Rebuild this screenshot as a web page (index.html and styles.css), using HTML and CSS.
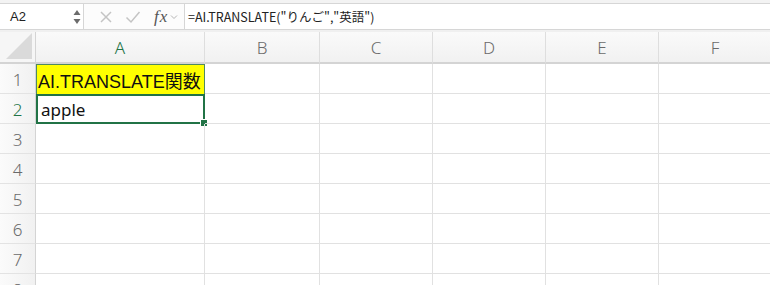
FILE: index.html
```html
<!DOCTYPE html>
<html lang="ja">
<head>
<meta charset="utf-8">
<link rel="stylesheet" href="styles.css">
</head>
<body>
<div class="app">
  <div class="fbar">
    <div class="namebox">
      <span class="nb-text">A2</span>
      <svg class="spin" width="8" height="16" viewBox="0 0 8 16"><path d="M4 1 L7.5 6 L0.5 6 Z" fill="#6b6b6b"/><path d="M4 15 L7.5 10 L0.5 10 Z" fill="#6b6b6b"/></svg>
    </div>
    <div class="tools">
      <svg class="ic" width="14" height="14" viewBox="0 0 14 14"><path d="M2 2 L12 12 M12 2 L2 12" stroke="#c4c4c4" stroke-width="1.5" fill="none"/></svg>
      <svg class="ic" width="16" height="14" viewBox="0 0 16 14"><path d="M1.5 7.5 L6 12 L14.5 2" stroke="#c4c4c4" stroke-width="1.5" fill="none"/></svg>
      <span class="fx"><i>f</i><i>x</i></span>
      <svg class="chev" width="8" height="6" viewBox="0 0 8 6"><path d="M1 1.5 L4 4.5 L7 1.5" stroke="#b5b5b5" stroke-width="1" fill="none"/></svg>
    </div>
    <div class="formula">=AI.TRANSLATE("りんご","英語")</div>
  </div>
  <div class="sheet">
    <div class="corner"><svg width="26" height="26" viewBox="0 0 26 26"><path d="M26 0 L26 26 L0 26 Z" fill="#dadada"/></svg></div>
    <div class="ch sel">A</div>
    <div class="ch">B</div>
    <div class="ch">C</div>
    <div class="ch">D</div>
    <div class="ch">E</div>
    <div class="ch last">F</div>

    <div class="rh">1</div>
    <div class="c a1">AI.TRANSLATE関数</div>
    <div class="c"></div><div class="c"></div><div class="c"></div><div class="c"></div><div class="c"></div>

    <div class="rh sel">2</div>
    <div class="c a2">apple<span class="handle"></span></div>
    <div class="c"></div><div class="c"></div><div class="c"></div><div class="c"></div><div class="c"></div>

    <div class="rh">3</div>
    <div class="c"></div><div class="c"></div><div class="c"></div><div class="c"></div><div class="c"></div><div class="c"></div>
    <div class="rh">4</div>
    <div class="c"></div><div class="c"></div><div class="c"></div><div class="c"></div><div class="c"></div><div class="c"></div>
    <div class="rh">5</div>
    <div class="c"></div><div class="c"></div><div class="c"></div><div class="c"></div><div class="c"></div><div class="c"></div>
    <div class="rh">6</div>
    <div class="c"></div><div class="c"></div><div class="c"></div><div class="c"></div><div class="c"></div><div class="c"></div>
    <div class="rh">7</div>
    <div class="c"></div><div class="c"></div><div class="c"></div><div class="c"></div><div class="c"></div><div class="c"></div>
    <div class="rh">8</div>
    <div class="c"></div><div class="c"></div><div class="c"></div><div class="c"></div><div class="c"></div><div class="c"></div>
  </div>
</div>
</body>
</html>
```
FILE: styles.css
```css
* { box-sizing: border-box; }
html, body { margin: 0; padding: 0; }
body {
  width: 770px;
  height: 287px;
  overflow: hidden;
  background: #fff;
  font-family: "Noto Sans", "Noto Sans CJK JP", sans-serif;
}
.app { width: 770px; }
.fbar {
  height: 32px;
  background: #f0f0f0;
  border-top: 3px solid #f3f3f3;
  display: flex;
  align-items: stretch;
  padding-bottom: 2px;
}
.fbar > * { border-top: 1px solid #d6d6d6; border-bottom: 1px solid #d6d6d6; }
.namebox {
  width: 84px;
  background: #fff;
  border-right: 1px solid #d6d6d6;
  display: flex;
  align-items: center;
  justify-content: space-between;
  padding: 0 2px 0 10px;
  font-size: 13px;
  color: #222;
}
.nb-text { font-family: "Liberation Sans", Arial, sans-serif; }
.tools {
  width: 101px;
  background: #fcfcfc;
  border-right: 1px solid #d6d6d6;
  display: flex;
  align-items: center;
  padding-left: 15px;
}
.tools .ic { margin-right: 12px; }
.fx {
  font-family: "Liberation Serif", "DejaVu Serif", serif;
  font-size: 17px;
  color: #555;
  margin-left: 1px;
}
.fx i:first-child { margin-right: 1px; }
.chev { margin-left: 3px; }
.formula {
  flex: 1;
  background: #fff;
  display: flex;
  align-items: center;
  padding-left: 3px;
  font-size: 12.5px;
  color: #222;
  font-family: "Noto Sans CJK JP", sans-serif;
}
.sheet {
  display: grid;
  grid-template-columns: 36px 169px 115px 113px 113px 113px 113px;
  grid-template-rows: 32px repeat(8, 30px);
  height: 253px;
  overflow: hidden;
}
.corner {
  background: #f6f6f6;
  border-right: 1px solid #d4d4d4;
  border-bottom: 2px solid #d4d4d4;
  display: flex;
  align-items: flex-end;
  justify-content: flex-end;
  padding: 0 3px 3px 0;
}
.ch {
  background: linear-gradient(#fafafa, #f1f1f1);
  border-right: 1px solid #dedede;
  border-bottom: 2px solid #d4d4d4;
  display: flex;
  align-items: center;
  justify-content: center;
  font-size: 17px;
  color: #6a6a6a;
  font-family: "Noto Sans", sans-serif;
  font-weight: 300;
}
.ch.last { border-right: 1px solid #e6e6e6; }
.ch.sel { color: #217346; }
.rh {
  background: linear-gradient(90deg, #fbfbfb, #f1f1f1);
  border-right: 1px solid #d4d4d4;
  border-bottom: 1px solid #e3e3e3;
  display: flex;
  align-items: center;
  justify-content: center;
  font-size: 17px;
  color: #6a6a6a;
  font-family: "Noto Sans", sans-serif;
  font-weight: 300;
  padding-top: 1px;
}
.rh.sel { color: #217346; }
.c {
  border-right: 1px solid #e1e1e1;
  border-bottom: 1px solid #e1e1e1;
  position: relative;
}
.a1 {
  background: #ffff00;
  border: 1px solid #4f8a60;
  border-bottom: none;
  display: flex;
  align-items: center;
  padding-left: 1px;
  font-size: 18px;
  color: #111;
  font-family: "Liberation Sans", "Noto Sans CJK JP", sans-serif;
  white-space: nowrap;
}
.a2 {
  border: 2px solid #217346;
  display: flex;
  align-items: center;
  padding-left: 3px;
  font-size: 17px;
  color: #111;
  font-family: "Noto Sans", sans-serif;
}
.handle {
  position: absolute;
  right: -5px;
  bottom: -5px;
  width: 6px;
  height: 6px;
  background: #217346;
  border: 1px solid #fff;
  box-sizing: content-box;
}
```
